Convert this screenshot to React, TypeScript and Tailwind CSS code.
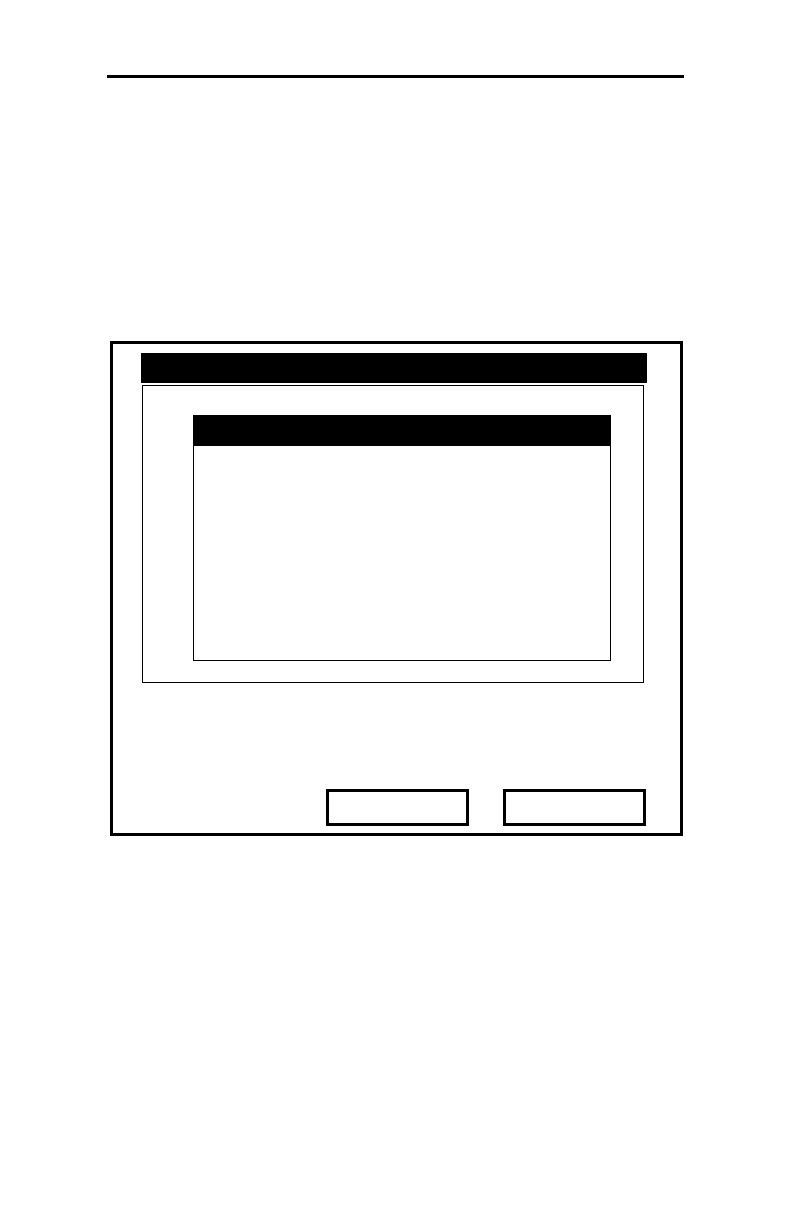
import React from "react";

export default function App() {
  return (
    <div className="w-[792px] h-[1224px] bg-white overflow-hidden" style={{ fontFamily: '"Liberation Sans", Arial, sans-serif' }}>
      <div className="ml-[107px] mt-[75px] w-[577px] h-[3px] bg-black" />
      <div className="ml-[110px] mt-[263px] w-[573px] h-[495px] border-[3px] border-black flex flex-col">
        <div className="ml-[28px] mt-[9px] w-[506px] h-[30px] bg-black" />
        <div className="ml-[29px] mt-[2px] w-[502px] h-[298px] border border-black flex flex-col">
          <div className="ml-[50px] mt-[29px] w-[418px] h-[31px] bg-black" />
          <div className="ml-[50px] w-[418px] h-[215px] border border-t-0 border-black" />
        </div>
        <div className="mt-auto mb-[7px] flex justify-end gap-[34px] pr-[34px]">
          <div className="w-[143px] h-[37px] border-[3px] border-black" />
          <div className="w-[143px] h-[37px] border-[3px] border-black" />
        </div>
      </div>
    </div>
  );
}
